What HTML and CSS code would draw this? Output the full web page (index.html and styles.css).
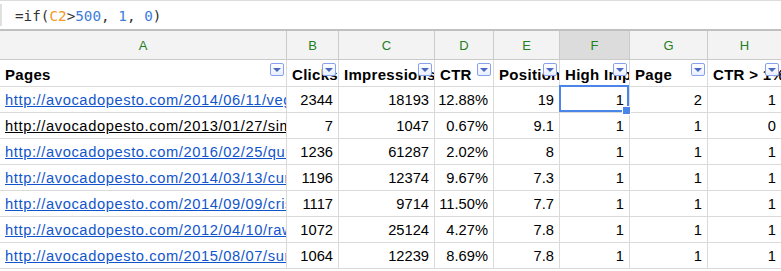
FILE: index.html
```html
<!DOCTYPE html>
<html lang="en">
<head>
    <meta charset="UTF-8">
    <meta name="viewport" content="width=device-width, initial-scale=1.0">
    <title>Search Console pages</title>
    <link rel="stylesheet" href="styles.css">
</head>
<body>
    <div class="formula-bar">
        <span class="edge"></span>
        <code class="formula">=if(<span class="ref">C2</span>&gt;<span class="num">500</span>, <span class="num">1</span>, <span class="num">0</span>)</code>
    </div>

    <div class="sheet">
        <!-- column letters -->
        <div class="col-head">A</div>
        <div class="col-head">B</div>
        <div class="col-head">C</div>
        <div class="col-head">D</div>
        <div class="col-head">E</div>
        <div class="col-head active">F</div>
        <div class="col-head">G</div>
        <div class="col-head">H</div>

        <!-- header row with filters -->
        <div class="cell head">Pages<span class="filter"></span></div>
        <div class="cell head">Clicks<span class="filter"></span></div>
        <div class="cell head">Impressions<span class="filter"></span></div>
        <div class="cell head">CTR<span class="filter"></span></div>
        <div class="cell head">Position<span class="filter"></span></div>
        <div class="cell head">High Impressions<span class="filter"></span></div>
        <div class="cell head">Page<span class="filter"></span></div>
        <div class="cell head">CTR &gt; 1%<span class="filter"></span></div>

        <div class="cell"><a href="#">http://avocadopesto.com/2014/06/11/vegan-pesto</a></div>
        <div class="cell num">2344</div>
        <div class="cell num">18193</div>
        <div class="cell num">12.88%</div>
        <div class="cell num">19</div>
        <div class="cell num selected">1<span class="handle"></span></div>
        <div class="cell num">2</div>
        <div class="cell num">1</div>

        <div class="cell"><a href="#" class="visited">http://avocadopesto.com/2013/01/27/simple-pesto</a></div>
        <div class="cell num">7</div>
        <div class="cell num">1047</div>
        <div class="cell num">0.67%</div>
        <div class="cell num">9.1</div>
        <div class="cell num">1</div>
        <div class="cell num">1</div>
        <div class="cell num">0</div>

        <div class="cell"><a href="#">http://avocadopesto.com/2016/02/25/quinoa-bowl</a></div>
        <div class="cell num">1236</div>
        <div class="cell num">61287</div>
        <div class="cell num">2.02%</div>
        <div class="cell num">8</div>
        <div class="cell num">1</div>
        <div class="cell num">1</div>
        <div class="cell num">1</div>

        <div class="cell"><a href="#">http://avocadopesto.com/2014/03/13/curry-soup</a></div>
        <div class="cell num">1196</div>
        <div class="cell num">12374</div>
        <div class="cell num">9.67%</div>
        <div class="cell num">7.3</div>
        <div class="cell num">1</div>
        <div class="cell num">1</div>
        <div class="cell num">1</div>

        <div class="cell"><a href="#">http://avocadopesto.com/2014/09/09/crispy-tofu</a></div>
        <div class="cell num">1117</div>
        <div class="cell num">9714</div>
        <div class="cell num">11.50%</div>
        <div class="cell num">7.7</div>
        <div class="cell num">1</div>
        <div class="cell num">1</div>
        <div class="cell num">1</div>

        <div class="cell"><a href="#">http://avocadopesto.com/2012/04/10/raw-tacos</a></div>
        <div class="cell num">1072</div>
        <div class="cell num">25124</div>
        <div class="cell num">4.27%</div>
        <div class="cell num">7.8</div>
        <div class="cell num">1</div>
        <div class="cell num">1</div>
        <div class="cell num">1</div>

        <div class="cell"><a href="#">http://avocadopesto.com/2015/08/07/summer-salad</a></div>
        <div class="cell num">1064</div>
        <div class="cell num">12239</div>
        <div class="cell num">8.69%</div>
        <div class="cell num">7.8</div>
        <div class="cell num">1</div>
        <div class="cell num">1</div>
        <div class="cell num">1</div>
    </div>
</body>
</html>
```

FILE: styles.css
```css
body {
    margin: 0;
    background: #fff;
    font-family: "Liberation Sans", Arial, sans-serif;
    overflow: hidden;
}

.formula-bar {
    height: 28px;
    border-top: 1px solid #dcdcdc;
    display: flex;
    align-items: center;
}

.formula-bar .edge {
    width: 2px;
    height: 22px;
    background: #e0e0e0;
    margin-right: 13px;
}

.formula {
    font-family: "DejaVu Sans Mono", monospace;
    font-size: 14.3px;
    color: #333;
    padding-top: 1px;
}

.formula .ref {
    color: #f29a26;
}

.formula .num {
    color: #3d7ddb;
}

.sheet {
    display: grid;
    grid-template-columns: 287px 52px 96px 59px 66px 70px 78px 74px;
    grid-template-rows: 29px 27px repeat(7, 26px);
    border-top: 2px solid #c0c0c0;
    width: 782px;
}

.col-head {
    background: #f3f3f3;
    border-right: 1px solid #cacaca;
    border-bottom: 1px solid #cacaca;
    color: #23801f;
    font-size: 13px;
    display: flex;
    align-items: center;
    justify-content: center;
    padding-top: 1px;
}

.col-head.active {
    background: #dcdcdc;
}

.cell {
    position: relative;
    border-right: 1px solid #dadada;
    border-bottom: 1px solid #dadada;
    font-size: 14.7px;
    line-height: 17px;
    color: #000;
    white-space: nowrap;
    overflow: hidden;
    display: flex;
    align-items: flex-end;
    padding: 0 5px 3px 5px;
}

.cell.head {
    font-weight: bold;
    font-size: 15px;
    letter-spacing: 0.3px;
}

.cell.num {
    justify-content: flex-end;
}

.cell a {
    color: #1155cc;
    text-decoration: underline;
    letter-spacing: 0.6px;
}

.cell a.visited {
    color: #000;
}

.filter {
    position: absolute;
    top: 3px;
    right: 2px;
    width: 12px;
    height: 11px;
    border: 1px solid #86a2ee;
    border-radius: 2px;
    background: linear-gradient(#ffffff, #e9efff);
}

.filter::after {
    content: "";
    position: absolute;
    left: 2px;
    top: 4px;
    border-left: 4px solid transparent;
    border-right: 4px solid transparent;
    border-top: 4px solid #4d68c2;
}

.cell.selected {
    overflow: visible;
}

.cell.selected::before {
    content: "";
    position: absolute;
    top: -2px;
    left: -1px;
    right: 0;
    bottom: 0;
    border: 2px solid #4a86e8;
}

.handle {
    position: absolute;
    right: -2px;
    bottom: -3px;
    width: 7px;
    height: 7px;
    background: #4a86e8;
    border: 1px solid #fff;
    z-index: 1;
}
```
